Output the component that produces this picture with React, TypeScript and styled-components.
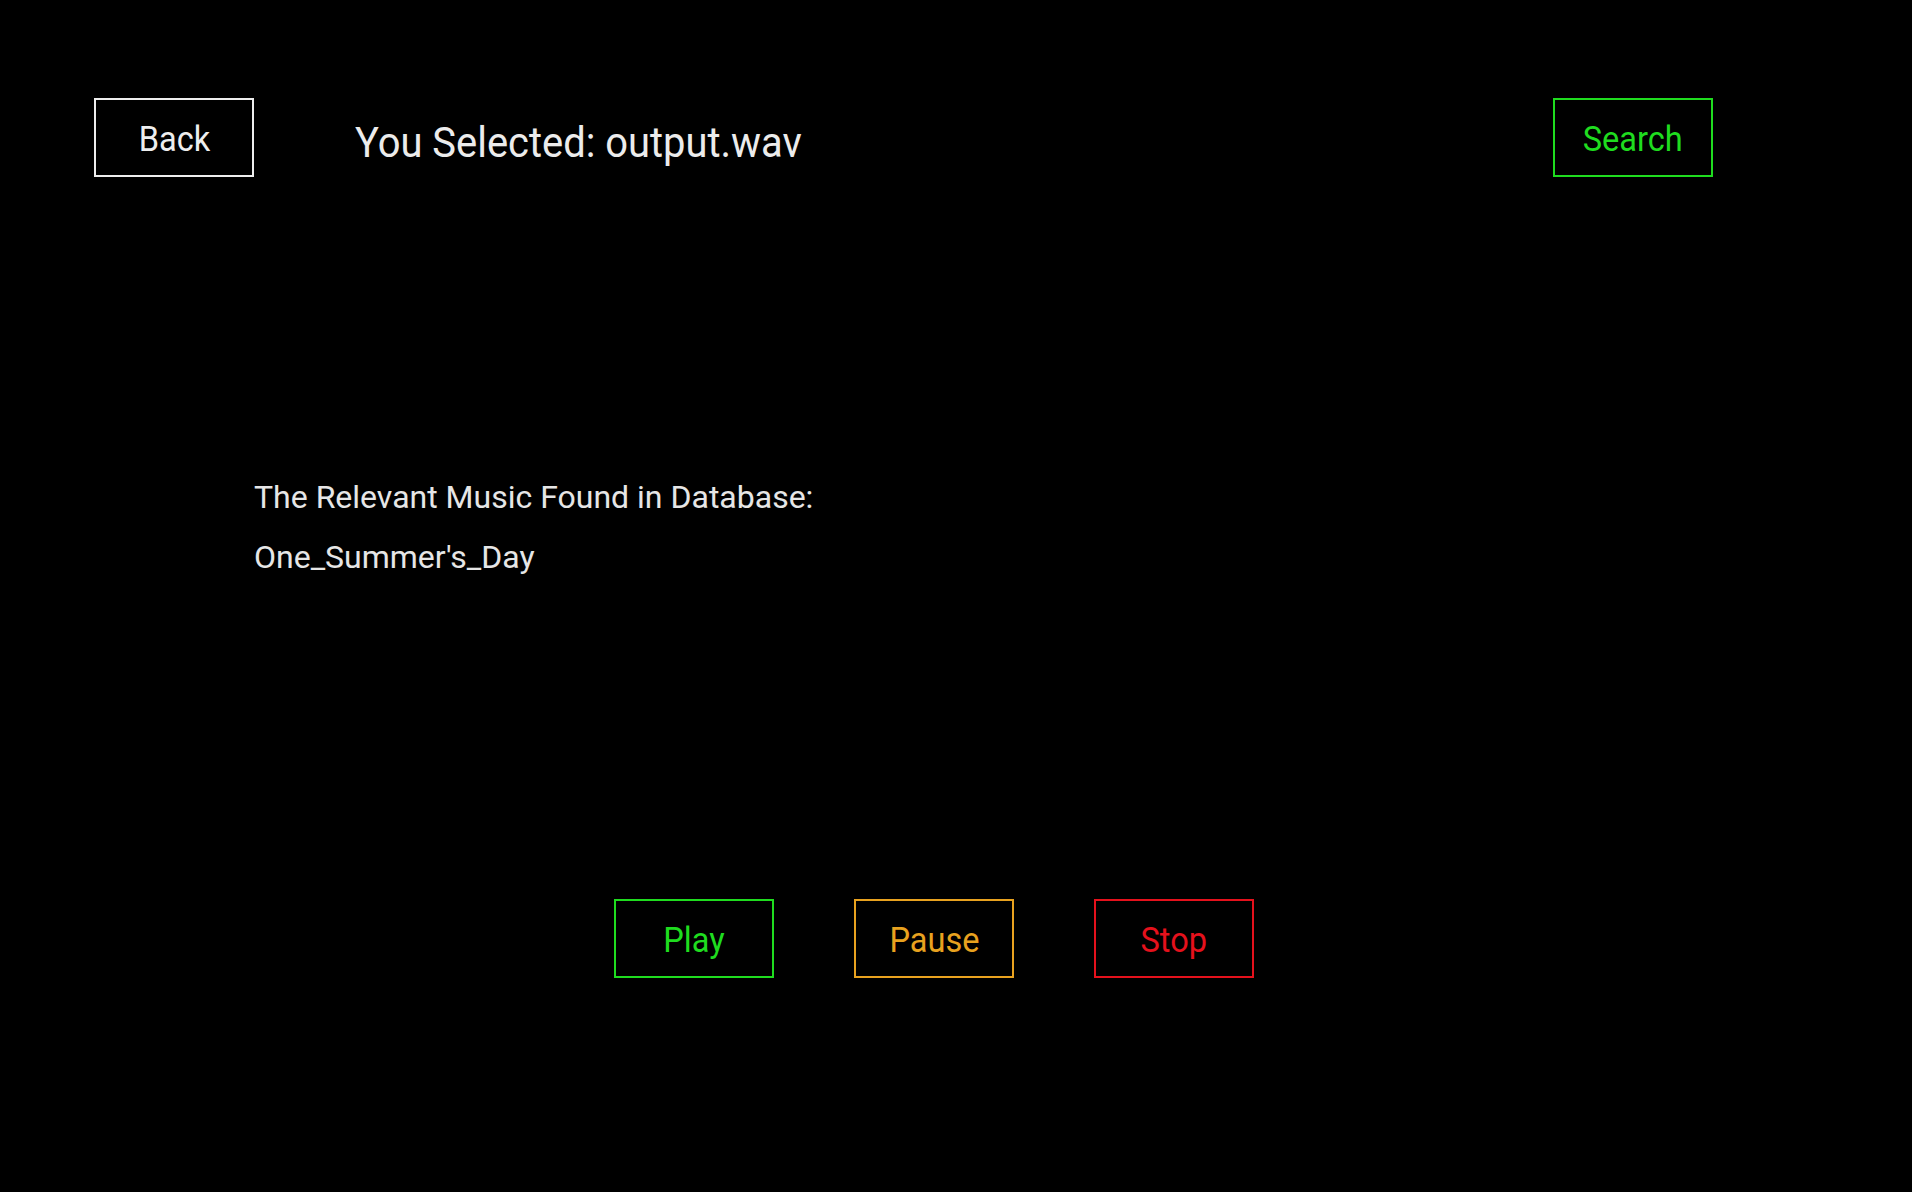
import React from "react";
import styled, { createGlobalStyle } from "styled-components";

const Global = createGlobalStyle`
  html, body { margin: 0; padding: 0; background: #000; }
  body { font-family: Roboto, "Liberation Sans", sans-serif; }
`;

const Page = styled.div`
  width: 1912px;
  height: 1192px;
  background: #000;
  display: flex;
  flex-direction: column;
  box-sizing: border-box;
  padding-top: 98px;
`;

const TopBar = styled.div`
  display: flex;
  align-items: center;
  padding: 0 199px 0 94px;
`;

const OutlineButton = styled.button<{ $color: string }>`
  box-sizing: border-box;
  width: 160px;
  height: 79px;
  background: #000;
  border: 2px solid ${(p) => p.$color};
  color: ${(p) => p.$color};
  font-family: Roboto, "Liberation Sans", sans-serif;
  font-size: 35px;
  padding: 0;
  display: flex;
  align-items: center;
  justify-content: center;
  cursor: pointer;
`;

const Label = styled.span`
  display: inline-block;
  transform: translateY(2px) scaleX(0.93);
`;

const Title = styled.h1`
  flex: 1;
  margin: 0 0 0 101px;
  padding-top: 9px;
  font-weight: 400;
  font-size: 42px;
  color: #ececec;
  transform: scaleX(0.95);
  transform-origin: left center;
`;

const Results = styled.div`
  margin-top: 299px;
  padding-left: 254px;
  display: flex;
  flex-direction: column;
  gap: 18px;
`;

const Line = styled.p`
  margin: 0;
  font-size: 32px;
  line-height: 42px;
  color: #e6e6e6;
`;

const Controls = styled.div`
  margin-top: 321px;
  padding-left: 614px;
  display: flex;
  gap: 80px;
`;

const GREEN = "#1fdc1f";
const ORANGE = "#e8a21f";
const RED = "#e5111c";

export default function App() {
  return (
    <Page>
      <Global />
      <TopBar>
        <OutlineButton $color="#eeeeee"><Label>Back</Label></OutlineButton>
        <Title>You Selected: output.wav</Title>
        <OutlineButton $color={GREEN}><Label>Search</Label></OutlineButton>
      </TopBar>
      <Results>
        <Line>The Relevant Music Found in Database:</Line>
        <Line>One_Summer's_Day</Line>
      </Results>
      <Controls>
        <OutlineButton $color={GREEN}><Label>Play</Label></OutlineButton>
        <OutlineButton $color={ORANGE}><Label>Pause</Label></OutlineButton>
        <OutlineButton $color={RED}><Label>Stop</Label></OutlineButton>
      </Controls>
    </Page>
  );
}
